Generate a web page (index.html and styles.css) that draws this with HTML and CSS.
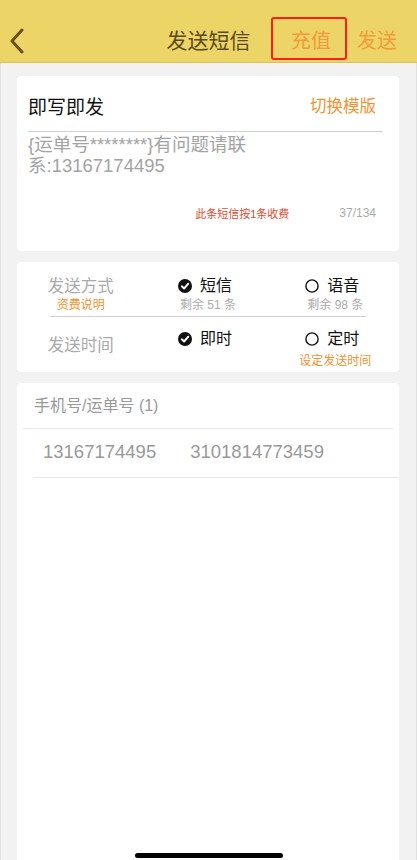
FILE: index.html
```html
<!DOCTYPE html>
<html lang="zh-CN">
<head>
	<meta charset="UTF-8">
	<title>发送短信</title>
	<link rel="stylesheet" href="styles.css">
</head>
<body>
	<div class="page">
		<header class="topbar">
			<div class="topbar-left">
				<svg class="back" width="16" height="26" viewBox="0 0 16 26">
					<path d="M13 2 L3 13 L13 24" fill="none" stroke="#6b4d1e" stroke-width="3" stroke-linecap="round" stroke-linejoin="round"/>
				</svg>
			</div>
			<h1 class="title">发送短信</h1>
			<div class="topbar-right">
				<span class="action action-mark">充值</span>
				<span class="action">发送</span>
			</div>
		</header>

		<main class="content">
			<!-- 短信内容 -->
			<section class="card compose">
				<div class="compose-head">
					<span class="compose-title">即写即发</span>
					<span class="switch">切换模版</span>
				</div>
				<div class="compose-text">{运单号********}有问题请联<br>系:13167174495</div>
				<div class="compose-foot">
					<span class="fee">此条短信按1条收费</span>
					<span class="count">37/134</span>
				</div>
			</section>

			<!-- 发送方式 / 时间 -->
			<section class="card options">
				<div class="opt-row opt-row-first">
					<div class="opt-cell">
						<div class="label">发送方式</div>
						<div class="label-sub">资费说明</div>
					</div>
					<div class="opt-cell">
						<div class="choice">
							<svg width="14" height="14" viewBox="0 0 14 14"><circle cx="7" cy="7" r="7" fill="#111"/><path d="M3.8 7.3 L6.1 9.5 L10.3 4.7" fill="none" stroke="#fff" stroke-width="1.9" stroke-linecap="round" stroke-linejoin="round"/></svg>
							<span>短信</span>
						</div>
						<div class="choice-sub">剩余 51 条</div>
					</div>
					<div class="opt-cell">
						<div class="choice">
							<svg width="14" height="14" viewBox="0 0 14 14"><circle cx="7" cy="7" r="6.1" fill="none" stroke="#111" stroke-width="1.4"/></svg>
							<span>语音</span>
						</div>
						<div class="choice-sub">剩余 98 条</div>
					</div>
				</div>
				<div class="row-line"></div>
				<div class="opt-row opt-row-second">
					<div class="opt-cell">
						<div class="label label-time">发送时间</div>
					</div>
					<div class="opt-cell">
						<div class="choice">
							<svg width="14" height="14" viewBox="0 0 14 14"><circle cx="7" cy="7" r="7" fill="#111"/><path d="M3.8 7.3 L6.1 9.5 L10.3 4.7" fill="none" stroke="#fff" stroke-width="1.9" stroke-linecap="round" stroke-linejoin="round"/></svg>
							<span>即时</span>
						</div>
					</div>
					<div class="opt-cell">
						<div class="choice">
							<svg width="14" height="14" viewBox="0 0 14 14"><circle cx="7" cy="7" r="6.1" fill="none" stroke="#111" stroke-width="1.4"/></svg>
							<span>定时</span>
						</div>
						<div class="label-sub set-time">设定发送时间</div>
					</div>
				</div>
			</section>

			<!-- 号码列表 -->
			<section class="card list">
				<div class="list-head">手机号/运单号 (1)</div>
				<div class="list-row">
					<span>13167174495</span>
					<span>3101814773459</span>
				</div>
			</section>
		</main>

		<div class="home-bar"></div>
	</div>
</body>
</html>
```

FILE: styles.css
```css
*{
	box-sizing:border-box;
	margin:0;
	padding:0;
}
body{
	font-family:"Liberation Sans","Noto Sans CJK SC",sans-serif;
	background:#f2f2f2;
	width:417px;
}
.page{
	position:relative;
	display:flex;
	flex-direction:column;
	min-height:860px;
	overflow:hidden;
}
/* 顶部导航 */
.topbar{
	display:grid;
	grid-template-columns:1fr auto 1fr;
	align-items:center;
	height:63px;
	padding-top:20px;
	background:#edd466;
	border-bottom:1px solid #d9c05a;
}
.back{
	display:block;
	margin-left:9px;
}
.title{
	font-size:21px;
	font-weight:normal;
	line-height:22px;
	color:#5b4a20;
}
.topbar-right{
	display:flex;
	justify-content:flex-end;
	gap:26px;
	padding-right:20px;
}
.action{
	position:relative;
	font-size:20px;
	line-height:22px;
	color:#f29a3c;
}
.action-mark::after{
	content:"";
	position:absolute;
	left:-20px;
	right:-16px;
	top:-13px;
	bottom:-8px;
	border:2px solid #ff1c1c;
	border-radius:3px;
}
/* 内容 */
.content{
	flex:1;
	display:flex;
	flex-direction:column;
	gap:11px;
	padding:13px 17px 0 16px;
	border-left:1px solid #e0e0e0;
	border-right:1px solid #e0e0e0;
}
.card{
	background:#fff;
	border-radius:4px;
}
.compose{
	padding:16px 16px 30px 11px;
}
.compose-head{
	display:flex;
	justify-content:space-between;
	align-items:center;
	height:26px;
	padding-right:7px;
}
.compose-title{
	font-size:19px;
	color:#111;
}
.switch{
	font-size:16.5px;
	color:#f0922e;
}
.compose-text{
	margin-top:13px;
	min-height:74px;
	padding-top:2px;
	border-top:1px solid #cfcfcf;
	font-size:18.5px;
	line-height:21px;
	color:#a3a3a3;
}
.compose-foot{
	display:flex;
	justify-content:flex-end;
	align-items:center;
	gap:50px;
	height:16px;
	padding-right:7px;
}
.fee{
	font-size:11px;
	color:#e24a2c;
}
.count{
	font-size:12px;
	color:#aaa;
}
/* 发送方式 */
.options{
	padding-bottom:3px;
}
.opt-row{
	display:grid;
	grid-template-columns:repeat(3,1fr);
	text-align:center;
}
.opt-row-first{
	padding-top:13px;
}
.opt-row-second{
	padding-top:11px;
}
.row-line{
	height:1px;
	margin:3px 33px 0;
	background:#cfcfcf;
}
.label{
	font-size:16.5px;
	line-height:22px;
	color:#aaa;
}
.label-time{
	margin-top:6px;
}
.label-sub{
	font-size:12px;
	line-height:16px;
	color:#f0922e;
}
.set-time{
	margin-top:3px;
}
.choice{
	display:flex;
	justify-content:center;
	align-items:center;
	gap:8px;
	padding-right:6px;
	font-size:16px;
	line-height:22px;
	color:#111;
}
.choice svg{
	display:block;
}
.choice-sub{
	font-size:12px;
	line-height:16px;
	color:#aaa;
}
/* 号码列表 */
.list{
	flex:1;
	border-radius:4px 4px 0 0;
}
.list-head{
	margin:0 5px;
	padding:12px 12px 11px;
	border-bottom:1px solid #ececec;
	font-size:16px;
	line-height:22px;
	color:#999;
}
.list-row{
	display:flex;
	gap:34px;
	margin-left:16px;
	padding:12px 0 14px 10px;
	border-bottom:1px solid #e6e6e6;
	font-size:18.5px;
	line-height:22px;
	color:#999;
}
.home-bar{
	position:absolute;
	left:50%;
	bottom:2px;
	width:148px;
	height:5px;
	margin-left:-74px;
	border-radius:3px;
	background:#000;
}
```
